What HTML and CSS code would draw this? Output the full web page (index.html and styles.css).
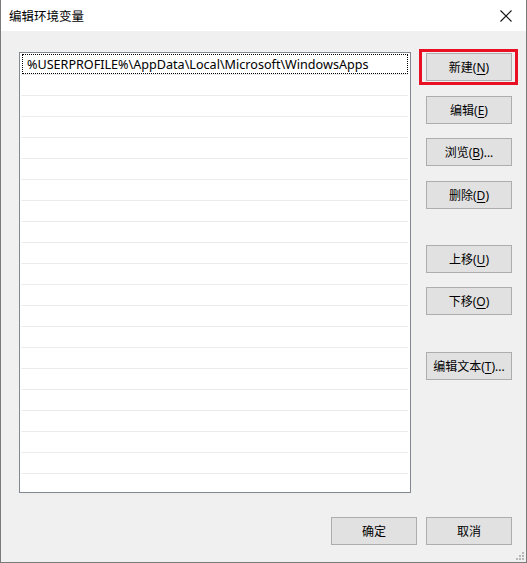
FILE: index.html
```html
<!DOCTYPE html>
<html lang="zh-CN">
<head>
<meta charset="utf-8">
<title>编辑环境变量</title>
<link rel="stylesheet" href="styles.css">
</head>
<body>
<div class="window">
  <div class="titlebar">
    <span class="title">编辑环境变量</span>
    <span class="close">
      <svg width="12" height="12" viewBox="0 0 12 12"><path d="M0.5 0.5 L11.5 11.5 M11.5 0.5 L0.5 11.5" stroke="#111" stroke-width="1.1" fill="none"/></svg>
    </span>
  </div>
  <div class="body">
    <div class="main">
      <div class="listbox">
        <div class="row selected"><span class="item">%USERPROFILE%\AppData\Local\Microsoft\WindowsApps</span></div>
        <div class="row"></div><div class="row"></div><div class="row"></div><div class="row"></div>
        <div class="row"></div><div class="row"></div><div class="row"></div><div class="row"></div>
        <div class="row"></div><div class="row"></div><div class="row"></div><div class="row"></div>
        <div class="row"></div><div class="row"></div><div class="row"></div><div class="row"></div>
        <div class="row"></div><div class="row"></div><div class="row"></div><div class="row"></div>
      </div>
      <div class="side">
        <div class="highlight"><button class="btn">新建(<u>N</u>)</button></div>
        <button class="btn g1">编辑(<u>E</u>)</button>
        <button class="btn g1c">浏览(<u>B</u>)...</button>
        <button class="btn g1">删除(<u>D</u>)</button>
        <button class="btn g2">上移(<u>U</u>)</button>
        <button class="btn g1b">下移(<u>O</u>)</button>
        <button class="btn g2b">编辑文本(<u>T</u>)...</button>
      </div>
    </div>
    <div class="footer">
      <button class="btn">确定</button>
      <button class="btn">取消</button>
    </div>
    <svg class="grip" width="8" height="8" viewBox="0 0 8 8">
      <rect x="6" y="0" width="2" height="2" fill="#b8b8b8"/>
      <rect x="3" y="3" width="2" height="2" fill="#b8b8b8"/>
      <rect x="6" y="3" width="2" height="2" fill="#b8b8b8"/>
      <rect x="0" y="6" width="2" height="2" fill="#b8b8b8"/>
      <rect x="3" y="6" width="2" height="2" fill="#b8b8b8"/>
      <rect x="6" y="6" width="2" height="2" fill="#b8b8b8"/>
    </svg>
  </div>
</div>
</body>
</html>
```
FILE: styles.css
```css
* { box-sizing: border-box; }
html, body { margin: 0; padding: 0; }
body {
  background: #fff;
  font-family: "Noto Sans", "Noto Sans CJK SC", sans-serif;
  font-size: 12px;
  color: #000;
}
.window {
  width: 527px;
  height: 563px;
  border: 1px solid #7a7a7a;
  border-top: none;
  display: flex;
  flex-direction: column;
  background: #f0f0f0;
}
.titlebar {
  height: 31px;
  background: #fff;
  display: flex;
  align-items: center;
  justify-content: space-between;
  padding: 0 14px 0 8px;
  flex: none;
}
.title {
  font-family: "Noto Sans CJK SC", sans-serif;
  font-size: 12.5px;
}
.close { display: flex; align-items: center; }
.body {
  flex: 1;
  position: relative;
  display: flex;
  flex-direction: column;
  padding: 21px 0 0 18px;
}
.main {
  display: flex;
  align-items: flex-start;
}
.listbox {
  width: 392px;
  height: 441px;
  background: #fff;
  border: 1px solid #828790;
  padding: 1px 2px 0 1px;
}
.row {
  height: 21px;
  border-bottom: 1px solid #ececec;
}
.row.selected {
  position: relative;
}
.row.selected::before {
  content: "";
  position: absolute;
  left: 1px; right: 0; top: 0; bottom: 0;
  border: 1px dotted #000;
}
.item {
  display: block;
  padding: 2px 0 0 6px;
  line-height: 18px;
  font-size: 12.6px;
  white-space: nowrap;
}
.side {
  margin-left: 15px;
  display: flex;
  flex-direction: column;
  padding-top: 1px;
}
.btn {
  width: 86px;
  height: 28px;
  background: #e1e1e1;
  border: 1px solid #adadad;
  font-family: "Noto Sans", "Noto Sans CJK SC", sans-serif;
  font-size: 12px;
  color: #000;
  padding: 0;
  margin: 0;
  display: flex;
  align-items: center;
  justify-content: center;
}
.btn u { text-underline-offset: 2px; }
.highlight {
  position: relative;
}
.highlight::after {
  content: "";
  position: absolute;
  left: -7px; right: -6px; top: -4px; bottom: -4px;
  border: 3px solid #e81123;
}
.g1 { margin-top: 15px; }
.g1c { margin-top: 14px; }
.g2 { margin-top: 36px; }
.g1b { margin-top: 14px; }
.g2b { margin-top: 37px; }
.footer {
  display: flex;
  justify-content: flex-end;
  gap: 9px;
  padding-right: 14px;
  margin-top: 24px;
}
.grip {
  position: absolute;
  right: 2px;
  bottom: 2px;
}
```
